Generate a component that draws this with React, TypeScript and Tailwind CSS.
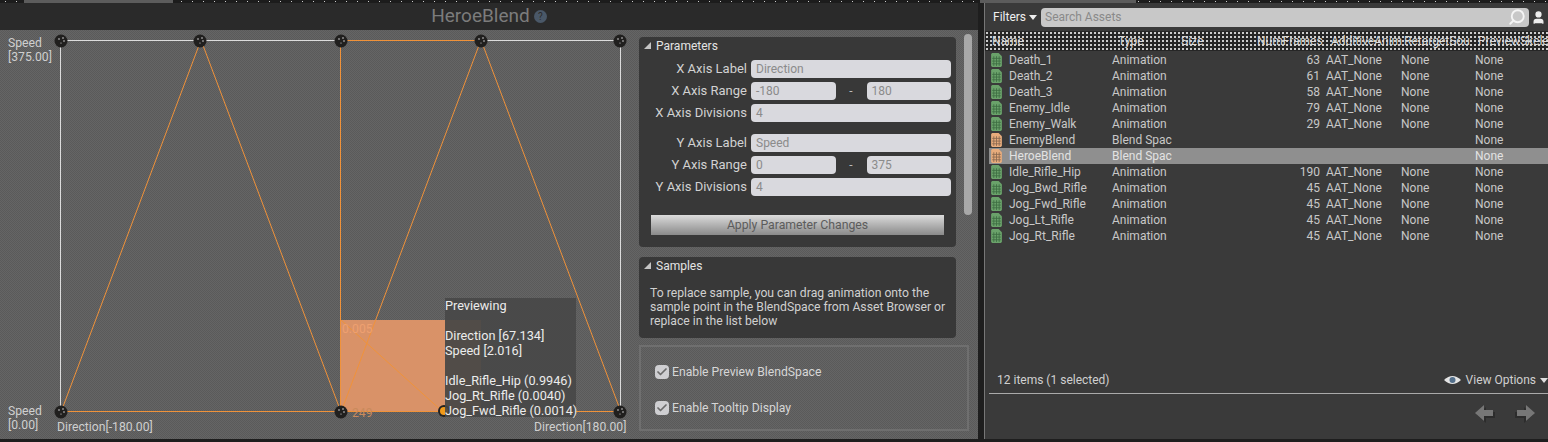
import { Check, Search, User } from "lucide-react";

const assets = [
  { name: "Death_1", type: "Animation", frames: "63", add: "AAT_None", retarget: "None", preview: "None" },
  { name: "Death_2", type: "Animation", frames: "61", add: "AAT_None", retarget: "None", preview: "None" },
  { name: "Death_3", type: "Animation", frames: "58", add: "AAT_None", retarget: "None", preview: "None" },
  { name: "Enemy_Idle", type: "Animation", frames: "79", add: "AAT_None", retarget: "None", preview: "None" },
  { name: "Enemy_Walk", type: "Animation", frames: "29", add: "AAT_None", retarget: "None", preview: "None" },
  { name: "EnemyBlend", type: "Blend Spac", frames: "", add: "", retarget: "", preview: "None" },
  { name: "HeroeBlend", type: "Blend Spac", frames: "", add: "", retarget: "", preview: "None", selected: true },
  { name: "Idle_Rifle_Hip", type: "Animation", frames: "190", add: "AAT_None", retarget: "None", preview: "None" },
  { name: "Jog_Bwd_Rifle", type: "Animation", frames: "45", add: "AAT_None", retarget: "None", preview: "None" },
  { name: "Jog_Fwd_Rifle", type: "Animation", frames: "45", add: "AAT_None", retarget: "None", preview: "None" },
  { name: "Jog_Lt_Rifle", type: "Animation", frames: "45", add: "AAT_None", retarget: "None", preview: "None" },
  { name: "Jog_Rt_Rifle", type: "Animation", frames: "45", add: "AAT_None", retarget: "None", preview: "None" },
];

const xAxis = [
  { label: "X Axis Label", value: "Direction" },
  { label: "X Axis Range", from: "-180", to: "180" },
  { label: "X Axis Divisions", value: "4" },
];

const yAxis = [
  { label: "Y Axis Label", value: "Speed" },
  { label: "Y Axis Range", from: "0", to: "375" },
  { label: "Y Axis Divisions", value: "4" },
];

const orange = "#f0923a";
const white = "#dcdcdc";

function Node({ x, y }: { x: number; y: number }) {
  return (
    <g>
      <circle cx={x} cy={y} r="6.5" fill="#201f1e" />
      <circle cx={x - 2} cy={y - 2} r="0.7" fill="#fff" />
      <circle cx={x + 2} cy={y - 3} r="0.7" fill="#fff" />
      <circle cx={x + 3} cy={y} r="0.7" fill="#fff" />
      <circle cx={x} cy={y + 2} r="0.6" fill="#ddd" />
    </g>
  );
}

function BlendGraph() {
  return (
    <svg className="absolute inset-0" width="639" height="412" viewBox="0 30 639 412">
      <rect x="341" y="320" width="104" height="92" fill="#d99268" />
      <rect x="445" y="320" width="36" height="92" fill="#a87c58" />
      <g stroke={white} strokeWidth="1" fill="none">
        <path d="M61 40.5H341M481 40.5H621M60.5 40V412M620.5 40V412" />
      </g>
      <g stroke={orange} strokeWidth="1" fill="none">
        <path d="M341 40.5H481M340.5 40V412M61 411.5H621" />
        <path d="M201 40L61 412M201 40L341 412M481 40L341 412M481 40L621 412" />
        <path d="M341 320L443 412" />
      </g>
      <Node x={61} y={41} />
      <Node x={200} y={41} />
      <Node x={341} y={41} />
      <Node x={481} y={41} />
      <Node x={620} y={41} />
      <Node x={61} y={412} />
      <Node x={341} y={412} />
      <Node x={620} y={412} />
      <circle cx="444" cy="411" r="6" fill="#232220" />
      <circle cx="444" cy="411" r="4" fill="#f09a1a" />
    </svg>
  );
}

function Field({ value }: { value: string }) {
  return (
    <div className="flex h-[18px] min-w-0 flex-1 items-center rounded-sm bg-[#d9d9de] px-[5px] text-[#8b8b8b]">
      {value}
    </div>
  );
}

function ParamRow({ row }: { row: { label: string; value?: string; from?: string; to?: string } }) {
  return (
    <div className="flex h-[18px] items-center gap-[4px]">
      <div className="w-[104px] text-right text-[13px] text-[#d2d2d2]">{row.label}</div>
      {row.value !== undefined ? (
        <Field value={row.value} />
      ) : (
        <div className="flex flex-1 items-center">
          <Field value={row.from ?? ""} />
          <div className="w-[31px] text-center text-[#bbb]">-</div>
          <Field value={row.to ?? ""} />
        </div>
      )}
    </div>
  );
}

function PanelHeader({ title }: { title: string }) {
  return (
    <div className="flex h-[15px] items-center gap-[5px] pl-[5px] text-[#e4e4e4]">
      <svg width="7" height="7" viewBox="0 0 7 7">
        <path d="M7 0V7H0Z" fill="#c4c4c4" />
      </svg>
      <span>{title}</span>
    </div>
  );
}

function FileIcon({ color, line }: { color: string; line: string }) {
  return (
    <svg width="11" height="14" viewBox="0 0 10 13" className="shrink-0">
      <path d="M0 1L1 0H7L10 3V12L9 13H1L0 12Z" fill={color} />
      <path d="M2.5 3V12M5 3V12M7.5 3V12M1 5H9M1 7.5H9M1 10H9" stroke={line} strokeWidth="0.8" />
    </svg>
  );
}

function CheckRow({ label }: { label: string }) {
  return (
    <div className="flex items-center gap-[3px] text-[#d6d6d6]">
      <div className="flex h-[14px] w-[14px] items-center justify-center rounded-sm bg-[#cfcfd2]">
        <Check size={12} strokeWidth={3.5} className="text-[#6b6b6b]" />
      </div>
      <span className="text-[12.2px]">{label}</span>
    </div>
  );
}

function Sidebar() {
  return (
    <div className="flex w-[339px] shrink-0 flex-col pt-[7px]">
      <div className="flex gap-[8px]">
        <div className="flex w-[317px] shrink-0 flex-col gap-[10px]">
          <section className="h-[210px] rounded-sm bg-[#383838] pt-[1px]">
            <PanelHeader title="Parameters" />
            <div className="flex flex-col gap-[4px] pl-[4px] pr-[5px] pt-[7px]">
              {xAxis.map((row) => (
                <ParamRow key={row.label} row={row} />
              ))}
            </div>
            <div className="flex flex-col gap-[4px] pl-[4px] pr-[5px] pt-[12px]">
              {yAxis.map((row) => (
                <ParamRow key={row.label} row={row} />
              ))}
            </div>
            <div className="px-[12px] pt-[19px]">
              <div className="flex h-[20px] items-center justify-center bg-gradient-to-b from-[#dcdcdc] to-[#8a8a8a] text-[12.25px] text-[#5c5c5c]">
                Apply Parameter Changes
              </div>
            </div>
          </section>
          <section className="h-[81px] overflow-hidden rounded-sm bg-[#383838] pt-[1px]">
            <PanelHeader title="Samples" />
            <p className="pl-[11px] pr-[8px] pt-[13px] text-[12.2px] leading-[14px] text-[#d0d0d0]">
              To replace sample, you can drag animation onto the sample point in the BlendSpace from Asset Browser or
              replace in the list below
            </p>
          </section>
        </div>
        <div className="mt-[-3px] h-[181px] w-[8px] shrink-0 rounded-sm bg-[#a8a8a8]" />
      </div>
      <div className="mt-[7px] flex h-[86px] w-[330px] flex-col justify-center gap-[18px] border-2 border-[#6f6f6f] pl-[14px] pt-[4px]">
        <CheckRow label="Enable Preview BlendSpace" />
        <CheckRow label="Enable Tooltip Display" />
      </div>
    </div>
  );
}

function Canvas() {
  return (
    <div className="relative h-[409px] w-[639px] shrink-0 text-[12.2px] text-[#cfcfcf]">
      <BlendGraph />
      <div className="absolute left-[8px] top-[6px] leading-[14px]">
        Speed
        <br />
        [375.00]
      </div>
      <div className="absolute left-[8px] top-[374px] leading-[14px]">
        Speed
        <br />
        [0.00]
      </div>
      <div className="absolute left-[57px] top-[388px]">Direction[-180.00]</div>
      <div className="absolute left-[534px] top-[388px]">Direction[180.00]</div>
      <div className="absolute left-[342px] top-[290px] text-[#eea070]">0.005</div>
      <div className="absolute left-[352px] top-[374px] text-[#c98a5c]">249</div>
      <div className="absolute left-[445px] top-[268px] h-[119px] w-[131px] whitespace-nowrap bg-[#474747]/90 text-[12.7px] leading-[15px] text-[#ececec]">
        <div>Previewing</div>
        <div className="pt-[15px]">Direction [67.134]</div>
        <div>Speed [2.016]</div>
        <div className="pt-[15px]">Idle_Rifle_Hip (0.9946)</div>
        <div>Jog_Rt_Rifle (0.0040)</div>
        <div>Jog_Fwd_Rifle (0.0014)</div>
      </div>
    </div>
  );
}

function AssetRow({ asset }: { asset: (typeof assets)[number] }) {
  const isBlend = asset.type !== "Animation";
  return (
    <div className={`ml-[4px] flex h-[16px] items-center pl-[2px] ${asset.selected ? "bg-[#8f8f8f] text-[#e2e2e2]" : "text-[#c8c8c8]"}`}>
      {isBlend ? <FileIcon color="#e8ac7c" line="#8a6a50" /> : <FileIcon color="#6aa26a" line="#3f6f44" />}
      <div className="w-[110px] pl-[7px]">{asset.name}</div>
      <div className="w-[165px]">{asset.type}</div>
      <div className="w-[43px] text-right">{asset.frames}</div>
      <div className="w-[81px] pl-[6px]">{asset.add}</div>
      <div className="w-[74px]">{asset.retarget}</div>
      <div>{asset.preview}</div>
    </div>
  );
}

function Caret({ fill }: { fill: string }) {
  return (
    <svg width="8" height="5" viewBox="0 0 8 5" className="shrink-0">
      <path d="M0 0H8L4 5Z" fill={fill} />
    </svg>
  );
}

function AssetBrowser() {
  return (
    <div className="flex h-[436px] min-w-0 flex-1 flex-col border-l border-[#777] bg-[#3a3a3a]">
      <div className="flex h-[28px] shrink-0 items-center pl-[8px]">
        <div className="flex w-[48px] items-center gap-[3px] text-[#f0f0f0]">
          Filters
          <Caret fill="#eee" />
        </div>
        <div className="flex h-[19px] flex-1 items-center justify-between rounded-sm bg-[#c8c8c8] pl-[4px] pr-[3px] text-[#8a8a8a]">
          Search Assets
          <Search size={18} strokeWidth={2.5} className="-scale-x-100 text-[#f4f4f4]" />
        </div>
        <User size={15} fill="#eee" className="mx-[2px] shrink-0 text-[#eee]" />
      </div>
      <div className="flex h-[20px] shrink-0 items-center overflow-hidden bg-[#262626] bg-[radial-gradient(#d8d8d8_0.7px,transparent_0.8px)] bg-[length:4px_4px] pl-[7px] text-[#dadada]">
        <div className="w-[126px] shrink-0">Name</div>
        <div className="w-[63px] shrink-0">Type</div>
        <div className="w-[76px] shrink-0">Size</div>
        <div className="w-[74px] shrink-0">NumFrames</div>
        <div className="w-[73px] shrink-0 overflow-hidden whitespace-nowrap">AdditiveAnim</div>
        <div className="w-[74px] shrink-0 overflow-hidden whitespace-nowrap">RetargetSou</div>
        <div className="shrink-0 whitespace-nowrap">PreviewSkele</div>
      </div>
      <div className="shrink-0 pt-[1px]">
        {assets.map((asset) => (
          <AssetRow key={asset.name} asset={asset} />
        ))}
      </div>
      <div className="flex-1" />
      <div className="ml-[4px] flex h-[22px] shrink-0 items-center justify-between border-b border-[#aaa] pb-[5px] pl-[8px] text-[#d0d0d0]">
        <span>12 items (1 selected)</span>
        <div className="flex items-center gap-[4px]">
          <svg width="17" height="10" viewBox="0 0 17 10" className="mr-[1px]">
            <path d="M0 5Q8.5 -3 17 5Q8.5 13 0 5Z" fill="#e4e4e4" />
            <circle cx="8.5" cy="5" r="3" fill="#54708c" />
          </svg>
          <span>View Options</span>
          <Caret fill="#ddd" />
        </div>
      </div>
      <div className="flex h-[45px] shrink-0 items-center justify-end gap-[24px] pb-[8px] pr-[13px]">
        <svg width="18" height="18" viewBox="0 0 18 18" className="drop-shadow-[2px_2px_0_#2c2c2c]">
          <path d="M9 1L0 9L9 17V12H18V6H9Z" fill="#777" />
        </svg>
        <svg width="18" height="18" viewBox="0 0 18 18" className="drop-shadow-[-2px_2px_0_#2c2c2c]">
          <path d="M9 1L18 9L9 17V12H0V6H9Z" fill="#777" />
        </svg>
      </div>
    </div>
  );
}

export default function App() {
  return (
    <div className="flex h-[442px] w-[1548px] flex-col overflow-hidden bg-[#1e1e1e] font-[Roboto,sans-serif] text-[12px]">
      <div className="flex h-[3px] shrink-0 bg-[#1c1c1c] bg-[radial-gradient(#cccccc_0.6px,transparent_0.7px)] bg-[length:11px_3px]">
        <div className="ml-[24px] w-[149px] bg-[#5c5c5c]" />
        <div className="ml-[807px] w-[156px] bg-[#5c5c5c]" />
      </div>
      <div className="flex min-h-0 flex-1 gap-[6px]">
        <div className="flex h-[436px] w-[978px] shrink-0 flex-col bg-[#5f5f5f] bg-[repeating-conic-gradient(#5a5a5a_0_25%,#656565_0_50%)] bg-[length:2px_2px]">
          <div className="flex h-[27px] shrink-0 items-center justify-center gap-[4px] bg-[#2a2a2a] text-[19px] text-[#7c7c7c]">
            HeroeBlend
            <span className="flex h-[13px] w-[13px] items-center justify-center rounded-full bg-[#4a5868] text-[10px] text-[#2a2a2a]">?</span>
          </div>
          <div className="flex min-h-0 flex-1">
            <Canvas />
            <Sidebar />
          </div>
        </div>
        <AssetBrowser />
      </div>
    </div>
  );
}
